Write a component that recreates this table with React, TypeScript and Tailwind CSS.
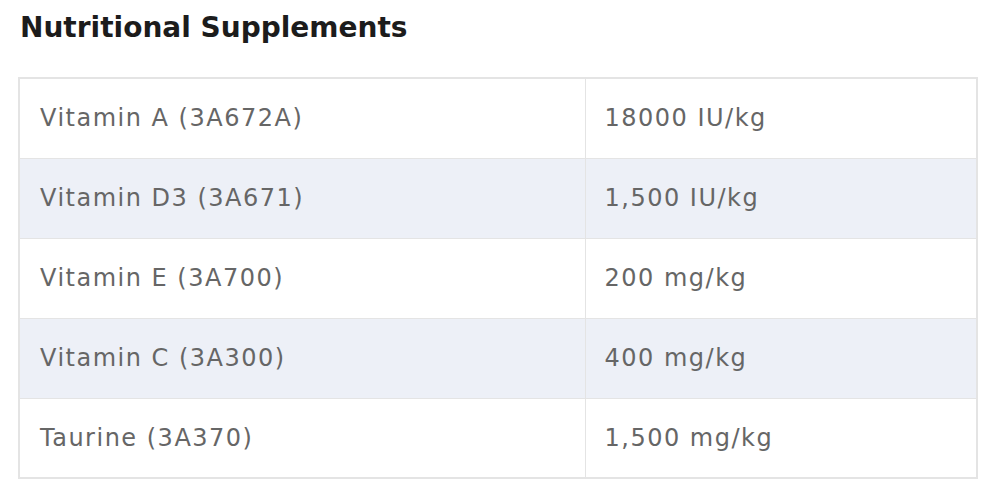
import React from "react";

const rows: [string, string][] = [
  ["Vitamin A (3A672A)", "18000 IU/kg"],
  ["Vitamin D3 (3A671)", "1,500 IU/kg"],
  ["Vitamin E (3A700)", "200 mg/kg"],
  ["Vitamin C (3A300)", "400 mg/kg"],
  ["Taurine (3A370)", "1,500 mg/kg"],
];

export default function App() {
  return (
    <div className="w-[1000px] h-[497px] bg-white pt-[11px] px-[18px]" style={{ fontFamily: "'DejaVu Sans', sans-serif" }}>
      <h2 className="text-[28px] leading-[34px] font-bold text-[#1c1c1c] pl-[2px]">Nutritional Supplements</h2>
      <table className="mt-[32px] w-[960px] border-collapse border-[2px] border-[#e4e4e4]">
        <tbody>
          {rows.map(([a, b], i) => (
            <tr key={a} className={i % 2 === 1 ? "bg-[#edf0f7]" : "bg-white"}>
              <td className="w-[566px] h-[80px] border border-[#e4e4e4] pl-[20px] text-[24px] tracking-[1.5px] text-[#666666] align-middle">{a}</td>
              <td className="h-[80px] border border-[#e4e4e4] pl-[19px] text-[24px] tracking-[1.5px] text-[#666666] align-middle">{b}</td>
            </tr>
          ))}
        </tbody>
      </table>
    </div>
  );
}
